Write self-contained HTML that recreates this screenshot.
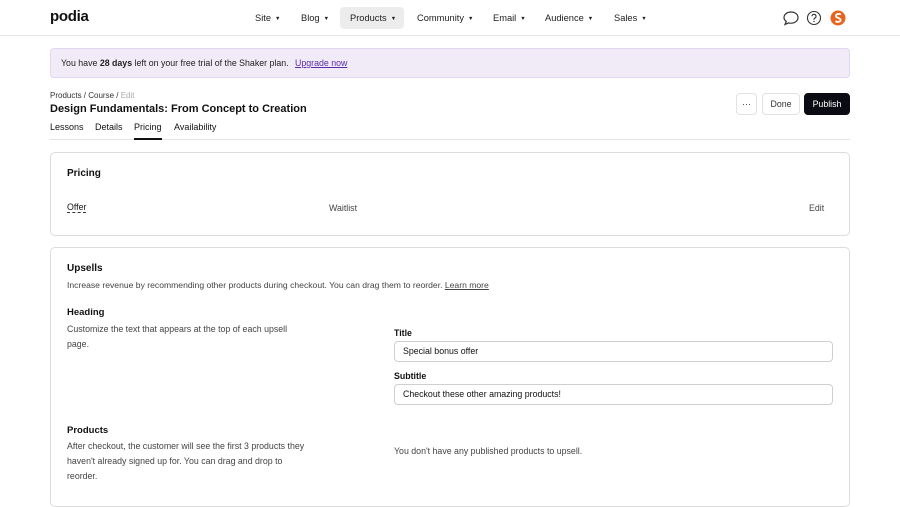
<!DOCTYPE html>
<html><head><meta charset="utf-8"><style>
*{box-sizing:border-box;margin:0;padding:0}
body{width:900px;height:484px;overflow:hidden;background:#fff;font-family:"Liberation Sans",Arial,sans-serif;color:#111;font-size:8.8px}
.top{height:36px;border-bottom:1px solid #e5e5e5;position:relative}
.logo{position:absolute;left:50px;top:8px;font-weight:bold;font-size:15px;letter-spacing:-0.3px}
.nav{position:absolute;top:7px;left:0;width:900px}
.nav span{position:absolute;top:0;height:22px;line-height:22px;font-size:9.3px;color:#222}
.nav span.act{background:#ececec;border-radius:4px}
.nav i{font-style:normal;font-size:5.5px;margin-left:4px;vertical-align:1px}
.banner{position:absolute;left:50px;top:48px;width:800px;height:30px;background:#f1ebf8;border:1px solid #e2d6f2;border-radius:4px;line-height:28px;padding-left:10px;font-size:8.8px;color:#222}
.banner a{color:#5b2aa8;text-decoration:underline;margin-left:4px}
.abs{position:absolute}
.btn{position:absolute;top:93px;height:22px;border:1px solid #e2e2e2;border-radius:4px;line-height:20px;text-align:center;font-size:8.8px;color:#333}
.card{position:absolute;left:50px;width:800px;border:1px solid #dcdcdc;border-radius:5px}
.inp{position:absolute;left:394px;width:439px;height:21px;border:1px solid #cfcfcf;border-radius:4px;padding-left:8px;line-height:19px;font-size:8.8px}
.g{color:#444}
</style></head><body>
<div class="top">
<div class="logo">podia</div>
<div class="nav">
<span style="left:255px">Site<i>▼</i></span>
<span style="left:301px">Blog<i>▼</i></span>
<span class="act" style="left:340px;width:64px;padding-left:10px">Products<i>▼</i></span>
<span style="left:417px">Community<i>▼</i></span>
<span style="left:493px">Email<i>▼</i></span>
<span style="left:545px">Audience<i>▼</i></span>
<span style="left:614px">Sales<i>▼</i></span>
</div>
<svg class="abs" style="left:782px;top:10px" width="18" height="16" viewBox="0 0 18 16"><path d="M9 2C5 2 2 4.5 2 7.5c0 1.6.9 3 2.3 4L3 14.5l3.6-1.6c.8.2 1.6.3 2.4.3 4 0 7-2.5 7-5.7S13 2 9 2z" fill="none" stroke="#333" stroke-width="1.2"/></svg>
<svg class="abs" style="left:806px;top:10px" width="16" height="16" viewBox="0 0 16 16"><circle cx="8" cy="8" r="6.5" fill="none" stroke="#333" stroke-width="1.1"/><path d="M6 6.3a2 2 0 1 1 2.6 1.9c-.4.2-.6.5-.6 1v.6" fill="none" stroke="#333" stroke-width="1.1"/><circle cx="8" cy="11.5" r=".7" fill="#333"/></svg>
<svg class="abs" style="left:830px;top:10px" width="16" height="16" viewBox="0 0 16 16"><circle cx="8" cy="8" r="7.5" fill="#e8641e"/><path d="M11 4.5c-2-1.2-5.5-.5-5 1.8.4 1.8 4.5 1.5 4.6 3.6.1 2-3 2.6-5.2 1.3" fill="none" stroke="#fff" stroke-width="1.8"/></svg>
</div>
<div class="banner">You have <b>28 days</b> left on your free trial of the Shaker plan. <a>Upgrade now</a></div>
<div class="abs" style="left:50px;top:91px;font-size:8px;color:#333">Products / Course / <span style="color:#aaa">Edit</span></div>
<div class="abs" style="left:50px;top:103px;font-size:11px;font-weight:bold">Design Fundamentals: From Concept to Creation</div>
<div class="abs" style="left:50px;top:122px;font-size:9px">Lessons</div>
<div class="abs" style="left:95px;top:122px;font-size:9px">Details</div>
<div class="abs" style="left:134px;top:122px;font-size:9px">Pricing</div>
<div class="abs" style="left:174px;top:122px;font-size:9px">Availability</div>
<div class="abs" style="left:50px;top:139px;width:800px;height:1px;background:#e2e2e2"></div>
<div class="abs" style="left:134px;top:138px;width:28px;height:2px;background:#111"></div>
<div class="btn" style="left:736px;width:21px">···</div>
<div class="btn" style="left:762px;width:38px">Done</div>
<div class="btn" style="left:804px;width:46px;background:#0b0b14;color:#fff;border-color:#0b0b14">Publish</div>
<div class="card" style="top:152px;height:84px">
<div class="abs" style="left:16px;top:15px;font-weight:bold;font-size:10px">Pricing</div>
<div class="abs" style="left:16px;top:49px;border-bottom:1px dashed #333">Offer</div>
<div class="abs g" style="left:278px;top:50px">Waitlist</div>
<div class="abs g" style="left:758px;top:50px">Edit</div>
</div>
<div class="card" style="top:247px;height:260px">
<div class="abs" style="left:16px;top:15px;font-weight:bold;font-size:10px">Upsells</div>
<div class="abs g" style="left:16px;top:32px;font-size:8.6px">Increase revenue by recommending other products during checkout. You can drag them to reorder. <span style="text-decoration:underline">Learn more</span></div>
<div class="abs" style="left:16px;top:59px;font-weight:bold;font-size:9.5px">Heading</div>
<div class="abs g" style="left:16px;top:74px;width:235px;line-height:15px">Customize the text that appears at the top of each upsell page.</div>
<div class="abs" style="left:343px;top:80px;font-weight:bold;font-size:8.8px">Title</div>
<div class="abs" style="left:343px;top:123px;font-weight:bold;font-size:8.8px">Subtitle</div>
<div class="abs" style="left:16px;top:177px;font-weight:bold;font-size:9.5px">Products</div>
<div class="abs g" style="left:16px;top:191px;width:238px;line-height:15px">After checkout, the customer will see the first 3 products they haven't already signed up for. You can drag and drop to reorder.</div>
<div class="abs g" style="left:343px;top:198px">You don't have any published products to upsell.</div>
</div>
<div class="inp" style="top:341px">Special bonus offer</div>
<div class="inp" style="top:384px">Checkout these other amazing products!</div>
</body></html>
